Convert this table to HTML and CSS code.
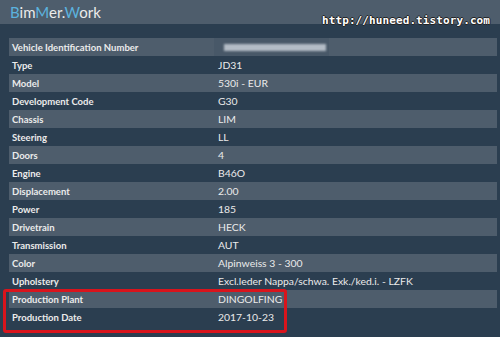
FILE: index.html
```html
<!DOCTYPE html>
<html>
<head>
<meta charset="utf-8">
<link rel="stylesheet" href="styles.css">
</head>
<body>
<header class="topbar">
  <div class="brand"><span class="hi">B</span>im<span class="hi">M</span>er.<span class="hi">W</span>ork</div>
</header>
<main class="content">
  <div class="table">
    <div class="row alt"><div class="k">Vehicle Identification Number</div><div class="v"><span class="blurbox"><span class="blur"></span></span></div></div>
    <div class="row"><div class="k">Type</div><div class="v">JD31</div></div>
    <div class="row alt"><div class="k">Model</div><div class="v">530i - EUR</div></div>
    <div class="row"><div class="k">Development Code</div><div class="v">G30</div></div>
    <div class="row alt"><div class="k">Chassis</div><div class="v">LIM</div></div>
    <div class="row"><div class="k">Steering</div><div class="v">LL</div></div>
    <div class="row alt"><div class="k">Doors</div><div class="v">4</div></div>
    <div class="row"><div class="k">Engine</div><div class="v">B46O</div></div>
    <div class="row alt"><div class="k">Displacement</div><div class="v">2.00</div></div>
    <div class="row"><div class="k">Power</div><div class="v">185</div></div>
    <div class="row alt"><div class="k">Drivetrain</div><div class="v">HECK</div></div>
    <div class="row"><div class="k">Transmission</div><div class="v">AUT</div></div>
    <div class="row alt"><div class="k">Color</div><div class="v">Alpinweiss 3 - 300</div></div>
    <div class="row"><div class="k">Upholstery</div><div class="v">Excl.leder Nappa/schwa. Exk./ked.i. - LZFK</div></div>
    <div class="row alt"><div class="k">Production Plant</div><div class="v">DINGOLFING</div></div>
    <div class="row"><div class="k">Production Date</div><div class="v">2017-10-23</div></div>
  </div>
</main>
<div class="watermark">http://huneed.tistory.com</div>
<div class="highlight"></div>
</body>
</html>
```
FILE: styles.css
```css
html, body {
  margin: 0;
  padding: 0;
}
body {
  width: 500px;
  height: 337px;
  overflow: hidden;
  background: #2b3e50;
  font-family: Lato, "Open Sans", sans-serif;
  position: relative;
}
.topbar {
  height: 24px;
  background: #4e5d6c;
  display: flex;
  align-items: center;
  padding-left: 10px;
}
.brand {
  font-size: 15px;
  color: #ebebeb;
  line-height: 1;
}
.hi {
  color: #5bb2de;
}
.content {
  padding: 14px 3px 0 9px;
}
.table {
  display: flex;
  flex-direction: column;
}
.row {
  display: grid;
  grid-template-columns: 209px 1fr;
  height: 18px;
  align-items: center;
  font-size: 10.4px;
  color: #ebebeb;
}
.row.alt {
  background: #4e5d6c;
}
.k {
  font-weight: bold;
  font-size: 9.5px;
  padding-left: 3px;
}
.v {
  display: flex;
  align-items: center;
}
.blurbox {
  display: flex;
  align-items: center;
  width: 115px;
  height: 18px;
  margin-left: -4px;
  background: #485868;
}
.blur {
  display: block;
  margin-left: 10px;
  width: 102px;
  height: 7px;
  background: #b3bcc6;
  filter: blur(1px);
}
.watermark {
  position: absolute;
  left: 322px;
  top: 14px;
  font-family: "DejaVu Sans Mono", monospace;
  font-weight: bold;
  font-size: 11px;
  color: #ffffff;
  letter-spacing: 0.1px;
  text-shadow: 1px 0 0 #222, -1px 0 0 #222, 0 1px 0 #222, 0 -1px 0 #222;
}
.highlight {
  position: absolute;
  left: 3px;
  top: 289px;
  width: 278px;
  height: 38px;
  border: 3px solid #d9141c;
  border-radius: 3px;
}
```
